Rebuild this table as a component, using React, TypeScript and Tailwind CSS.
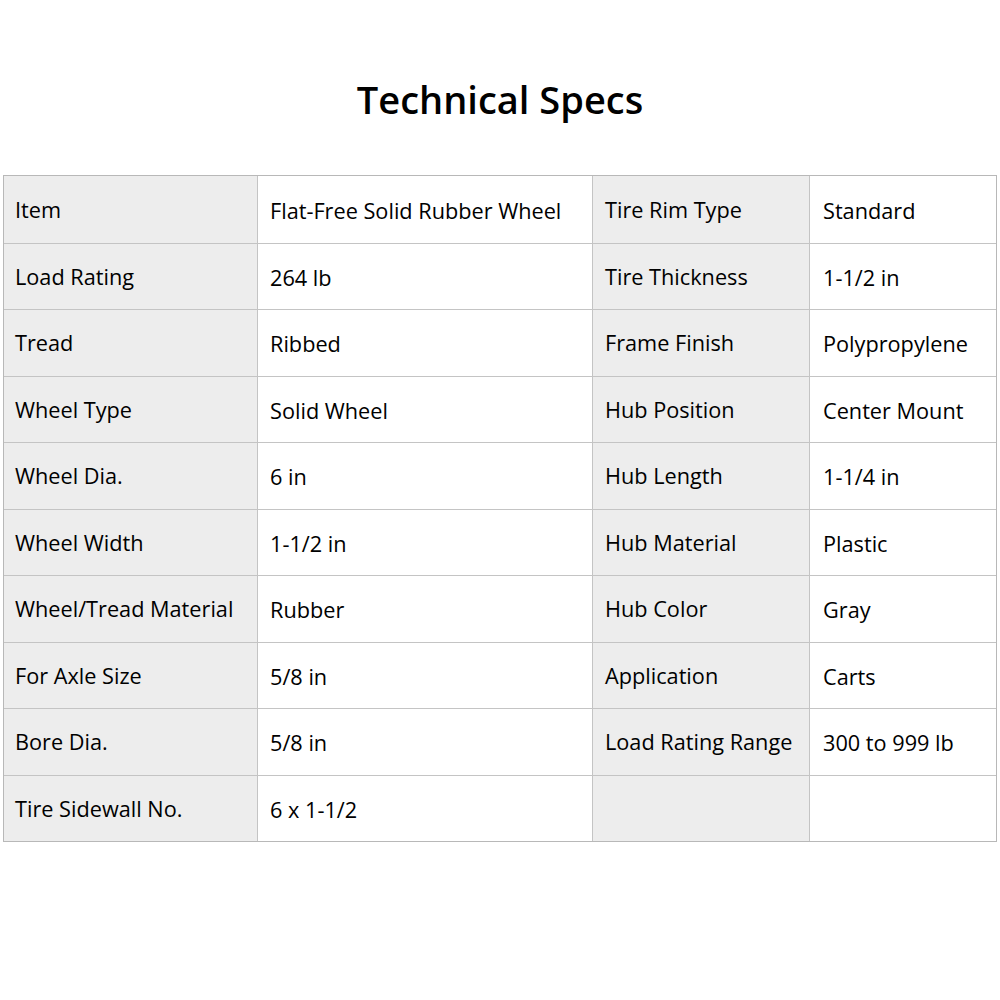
const rows: [string, string, string, string][] = [
  ["Item", "Flat-Free Solid Rubber Wheel", "Tire Rim Type", "Standard"],
  ["Load Rating", "264 lb", "Tire Thickness", "1-1/2 in"],
  ["Tread", "Ribbed", "Frame Finish", "Polypropylene"],
  ["Wheel Type", "Solid Wheel", "Hub Position", "Center Mount"],
  ["Wheel Dia.", "6 in", "Hub Length", "1-1/4 in"],
  ["Wheel Width", "1-1/2 in", "Hub Material", "Plastic"],
  ["Wheel/Tread Material", "Rubber", "Hub Color", "Gray"],
  ["For Axle Size", "5/8 in", "Application", "Carts"],
  ["Bore Dia.", "5/8 in", "Load Rating Range", "300 to 999 lb"],
  ["Tire Sidewall No.", "6 x 1-1/2", "", ""],
]

export default function App() {
  return (
    <div className="w-[1000px] h-[1000px] bg-white text-black font-['Open_Sans',sans-serif]">
      <h1 className="pt-[72px] h-[175px] text-center text-[38px] font-semibold leading-[54px]">
        Technical Specs
      </h1>
      <div className="ml-[3px] w-[994px] border border-[#b8b8b8]">
        {rows.map((r, i) => (
          <div
            key={i}
            className={`grid grid-cols-[254px_335px_217px_1fr] h-[66.5px] text-[21.7px] ${
              i > 0 ? "border-t border-[#c4c4c4]" : ""
            }`}
          >
            <div className="bg-[#ededed] border-r border-[#c4c4c4] px-[11px] flex items-center pt-[2px]">{r[0]}</div>
            <div className="border-r border-[#c4c4c4] px-[12px] flex items-center pt-[4px]">{r[1]}</div>
            <div className="bg-[#ededed] border-r border-[#c4c4c4] px-[12px] flex items-center pt-[2px]">{r[2]}</div>
            <div className="px-[13px] flex items-center pt-[4px]">{r[3]}</div>
          </div>
        ))}
      </div>
    </div>
  )
}
